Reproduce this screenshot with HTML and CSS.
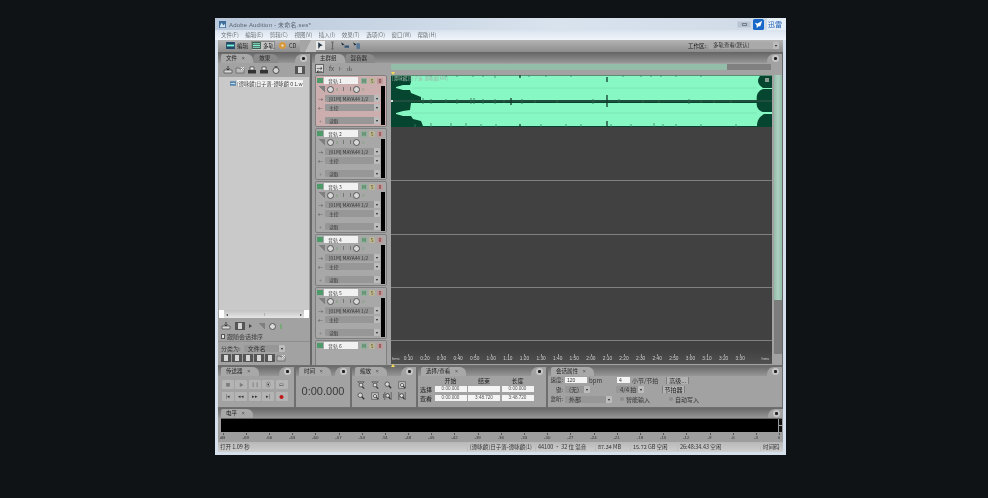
FILE: index.html
```html
<!DOCTYPE html>
<html>
<head>
  <meta charset="utf-8">
  <link rel="stylesheet" href="styles.css">
</head>
<body>
  <svg class="defs" width="0" height="0">
    <symbol id="lens" viewBox="0 0 10 10">
      <circle cx="4" cy="4" r="2.8" fill="#d8d8d8" stroke="#444" stroke-width="1"/>
      <path d="M6 6 L9 9" stroke="#333" stroke-width="1.6"/>
    </symbol>
    <symbol id="lens-box" viewBox="0 0 10 10">
      <rect x="1" y="1" width="8" height="8" fill="#cfcfcf" stroke="#555"/>
      <circle cx="5" cy="5" r="2" fill="#eee" stroke="#444"/>
      <path d="M6.5 6.5 L9 9" stroke="#333" stroke-width="1.4"/>
    </symbol>
    <symbol id="lens-arrow" viewBox="0 0 10 10">
      <path d="M1 1 L9 1 M1 1 L4 4 M9 1 L6 4" stroke="#555" stroke-width="1"/>
      <circle cx="5" cy="5" r="2.4" fill="#ddd" stroke="#444"/>
      <path d="M6.5 7 L9 9.5" stroke="#333" stroke-width="1.4"/>
    </symbol>
    <symbol id="lens-bar" viewBox="0 0 10 10">
      <path d="M1 0V10 M9 0V10" stroke="#555"/>
      <circle cx="4.5" cy="4.5" r="2.4" fill="#ddd" stroke="#333"/>
      <path d="M6 6.5 L8 9" stroke="#333" stroke-width="1.4"/>
    </symbol>
    <symbol id="file-a" viewBox="0 0 10 8">
      <path d="M1 4 H9 V7 H1Z" fill="#d8d8d8" stroke="#555" stroke-width=".8"/>
      <path d="M5 0 V4 M3.5 2.5 L5 4 L6.5 2.5" stroke="#333" fill="none" stroke-width=".9"/>
    </symbol>
    <symbol id="file-b" viewBox="0 0 10 8">
      <path d="M1 2 H4 L5 3 H9 V7 H1Z" fill="#bdbdbd" stroke="#666" stroke-width=".8"/>
      <path d="M6 1 L9 4 M9 1 L6 4" stroke="#eee" stroke-width=".9"/>
    </symbol>
    <symbol id="file-c" viewBox="0 0 10 8">
      <path d="M1 4 H9 V7.5 H1Z" fill="#333"/>
      <path d="M3 1 H7 V4 H3Z" fill="#eee" stroke="#333" stroke-width=".7"/>
    </symbol>
    <symbol id="file-d" viewBox="0 0 10 8">
      <circle cx="5" cy="4.5" r="3" fill="#d5d5d5" stroke="#444" stroke-width=".9"/>
      <path d="M3.5 0.8 H6.5" stroke="#444"/>
    </symbol>
  </svg>

  <div class="window">
    <div class="titlebar">
      <svg class="app-icon" viewBox="0 0 8 8"><rect width="8" height="8" fill="#3f6f9c"/><path d="M1 6 L3 2 L5 5 L7 3 V7 H1Z" fill="#d6e6f2"/></svg>
      <span class="title-text">Adobe Audition - 未命名.ses*</span>
      <span class="title-spacer"></span>
      <span class="restore-btn"><i></i></span>
      <svg class="thunder-icon" viewBox="0 0 12 12"><rect width="12" height="12" rx="2" fill="#1768c8"/><path d="M10 2 L5 5 L2 4 L4 7 L4 10 L6 8 L8 8Z" fill="#fff"/></svg>
      <span class="thunder-text">迅雷</span>
    </div>
    <div class="menubar">
      <span>文件(F)</span><span>编辑(E)</span><span>剪辑(C)</span><span>视图(V)</span><span>插入(I)</span><span>效果(T)</span><span>选项(O)</span><span>窗口(W)</span><span>帮助(H)</span>
    </div>
    <div class="toolbar">
      <span class="mode-btn"><svg viewBox="0 0 10 8"><rect width="10" height="8" fill="#24486a"/><path d="M1 4h8" stroke="#7fd" stroke-width="2"/></svg>编辑</span>
      <span class="mode-btn active"><svg viewBox="0 0 10 8"><rect width="10" height="8" fill="#3a5f4a"/><path d="M1 2h8M1 4h8M1 6h8" stroke="#9fe"/></svg>多轨</span>
      <span class="mode-btn"><svg viewBox="0 0 8 8"><circle cx="4" cy="4" r="4" fill="#d89a3c"/><circle cx="4" cy="4" r="1.2" fill="#eee"/></svg>CD</span>
      <span class="tool-sep"></span>
      <span class="tool-btn active"><svg viewBox="0 0 8 8"><path d="M2 1 L6 4 L4 4.5 L2 7Z" fill="#234"/></svg></span>
      <span class="tool-btn"><svg viewBox="0 0 8 8"><path d="M4 1V7M3 1h2M3 7h2" stroke="#666"/></svg></span>
      <span class="tool-btn"><svg viewBox="0 0 8 8"><path d="M1 1 L4 3 L2 4Z" fill="#234"/><path d="M4 5h4" stroke="#357" stroke-width="2"/></svg></span>
      <span class="tool-btn"><svg viewBox="0 0 8 8"><path d="M1 1 L4 3 L2 4Z" fill="#234"/><rect x="4" y="2" width="3" height="5" fill="#579"/></svg></span>
      <span class="title-spacer"></span>
      <span class="workspace-label">工作区:</span>
      <span class="select workspace-select">多轨查看(默认)<b></b></span>
    </div>

    <div class="main">
      <div class="files-panel">
        <div class="panel-head">
          <span class="tab">文件 <i>×</i></span><span class="tab off">效果</span>
          <span class="title-spacer"></span><span class="head-notch"><i class="round-btn"></i></span>
        </div>
        <div class="files-tools">
          <svg><use href="#file-a"/></svg><svg><use href="#file-b"/></svg><svg><use href="#file-c"/></svg><svg><use href="#file-c"/></svg><svg><use href="#file-d"/></svg>
          <span class="title-spacer"></span><i class="glyph boxed"></i>
        </div>
        <div class="file-list">
          <div class="file-row">
            <svg viewBox="0 0 8 6"><rect width="8" height="6" fill="#5b86b0"/><path d="M1 3h6" stroke="#dff"/></svg>
            <span>[谭咏麟]日子落-谭咏麟 0 1.w</span>
          </div>
        </div>
        <div class="file-scroll"><b>◂</b><span>⫶</span><b>▸</b></div>
        <div class="files-controls">
          <svg><use href="#file-a"/></svg><i class="glyph boxed"></i><i class="mini-arrow"></i>
          <i class="vol-ramp"></i><i class="knob"></i><i class="led"></i>
        </div>
        <div class="check-row"><i class="check"></i>跟随会话排序</div>
        <div class="sort-row">分类为:<span class="select sort-select">文件名<b></b></span></div>
        <div class="files-foot">
          <i class="glyph boxed"></i><i class="glyph boxed"></i><i class="glyph boxed"></i><i class="glyph boxed"></i><i class="glyph boxed"></i><svg><use href="#file-b"/></svg>
        </div>
      </div>

      <div class="session-panel">
        <div class="panel-head">
          <span class="tab">主群组</span><span class="tab off">混音器</span>
          <span class="title-spacer"></span><span class="head-notch"><i class="round-btn"></i></span>
        </div>
        <div class="session-top">
          <div class="track-tools">
            <span class="tt-box">⇄</span><span>fx</span><span>⊦</span><span>ılı</span>
          </div>
          <div class="overview"><i></i></div>
        </div>
        <div class="session-body">
          <div class="track-heads">
            <div class="track armed">
              <div class="tr-row"><i class="tr-led"></i><span class="tr-name">音轨 1</span><i class="msr m">M</i><i class="msr s">S</i><i class="msr r">R</i></div>
              <div class="tr-body">
                <div class="tr-rows">
                  <div class="tr-knobs"><i class="vol-ramp"></i><i class="knob"></i><em>0</em><i class="pan"></i><i class="knob"></i><em>0</em></div>
                  <div class="tr-sel"><u>→</u><span class="select">[01M] MAYA44 1/2<b></b></span></div>
                  <div class="tr-sel"><u>←</u><span class="select">主控<b></b></span></div>
                  <div class="tr-sel read"><u>◦</u><span class="select">读取<b></b></span></div>
                </div>
                <i class="tr-meter"></i>
              </div>
            </div>
            <div class="track">
              <div class="tr-row"><i class="tr-led"></i><span class="tr-name">音轨 2</span><i class="msr m">M</i><i class="msr s">S</i><i class="msr r">R</i></div>
              <div class="tr-body">
                <div class="tr-rows">
                  <div class="tr-knobs"><i class="vol-ramp"></i><i class="knob"></i><em>0</em><i class="pan"></i><i class="knob"></i><em>0</em></div>
                  <div class="tr-sel"><u>→</u><span class="select">[01M] MAYA44 1/2<b></b></span></div>
                  <div class="tr-sel"><u>←</u><span class="select">主控<b></b></span></div>
                  <div class="tr-sel read"><u>◦</u><span class="select">读取<b></b></span></div>
                </div>
                <i class="tr-meter"></i>
              </div>
            </div>
            <div class="track">
              <div class="tr-row"><i class="tr-led"></i><span class="tr-name">音轨 3</span><i class="msr m">M</i><i class="msr s">S</i><i class="msr r">R</i></div>
              <div class="tr-body">
                <div class="tr-rows">
                  <div class="tr-knobs"><i class="vol-ramp"></i><i class="knob"></i><em>0</em><i class="pan"></i><i class="knob"></i><em>0</em></div>
                  <div class="tr-sel"><u>→</u><span class="select">[01M] MAYA44 1/2<b></b></span></div>
                  <div class="tr-sel"><u>←</u><span class="select">主控<b></b></span></div>
                  <div class="tr-sel read"><u>◦</u><span class="select">读取<b></b></span></div>
                </div>
                <i class="tr-meter"></i>
              </div>
            </div>
            <div class="track">
              <div class="tr-row"><i class="tr-led"></i><span class="tr-name">音轨 4</span><i class="msr m">M</i><i class="msr s">S</i><i class="msr r">R</i></div>
              <div class="tr-body">
                <div class="tr-rows">
                  <div class="tr-knobs"><i class="vol-ramp"></i><i class="knob"></i><em>0</em><i class="pan"></i><i class="knob"></i><em>0</em></div>
                  <div class="tr-sel"><u>→</u><span class="select">[01M] MAYA44 1/2<b></b></span></div>
                  <div class="tr-sel"><u>←</u><span class="select">主控<b></b></span></div>
                  <div class="tr-sel read"><u>◦</u><span class="select">读取<b></b></span></div>
                </div>
                <i class="tr-meter"></i>
              </div>
            </div>
            <div class="track">
              <div class="tr-row"><i class="tr-led"></i><span class="tr-name">音轨 5</span><i class="msr m">M</i><i class="msr s">S</i><i class="msr r">R</i></div>
              <div class="tr-body">
                <div class="tr-rows">
                  <div class="tr-knobs"><i class="vol-ramp"></i><i class="knob"></i><em>0</em><i class="pan"></i><i class="knob"></i><em>0</em></div>
                  <div class="tr-sel"><u>→</u><span class="select">[01M] MAYA44 1/2<b></b></span></div>
                  <div class="tr-sel"><u>←</u><span class="select">主控<b></b></span></div>
                  <div class="tr-sel read"><u>◦</u><span class="select">读取<b></b></span></div>
                </div>
                <i class="tr-meter"></i>
              </div>
            </div>
            <div class="track">
              <div class="tr-row"><i class="tr-led"></i><span class="tr-name">音轨 6</span><i class="msr m">M</i><i class="msr s">S</i><i class="msr r">R</i></div>
            </div>
          </div>

          <div class="lanes">
            <div class="lane clip-lane">
              <svg class="wave" viewBox="0 0 381 52" preserveAspectRatio="none">
                <rect width="381" height="52" fill="#06452f"/>
                <path fill="#87f8c4" d="M5 12 L12 10 L19 10 L20 7 L20 1 L381 1 L381 25 L30 25 L30 22 L20 18 L19 15 L12 15 L5 13Z"/>
                <path fill="#87f8c4" d="M5 38 L12 36 L19 35 L20 28 L381 28 L381 51 L32 51 L30 46 L22 44 L20 41 L12 41 L5 39Z"/>
                <path fill="#06452f" d="M381 1 H369 C366 5 366 9 372 13 H381Z M381 14 H372 C366 16 365 22 366 26 C365 30 366 35 372 37 H381Z M381 39 H373 C368 42 366 46 366 51 H381Z"/>
                <rect x="0" y="0" width="381" height="1" fill="#5c8c76"/>
                <path d="M21 13H366 M21 38H366" stroke="#7ce6b5" stroke-width="1"/>
                <path d="M0 26H381" stroke="#3c5a4d" stroke-width="1.1"/>
                <path stroke="#2f6b52" stroke-width="0.8" fill="none" d="M32 23v6 M40 24v5 M55 24v4 M66 24v5 M80 23v6 M83 23v6 M92 24v5 M104 24v5 M113 25v3 M131 24v5 M144 25v3 M166 25v3 M202 24v5 M228 24v4 M252 25v3 M268 25v3 M298 24v5 M310 25v3 M323 25v3 M340 25v3"/>
                <path stroke="#15392b" stroke-width="1.3" fill="none" d="M216 20v12 M216 2v5 M216 46v6 M120 23v7 M129 0v3 M129 49v3"/>
                <path stroke="#3d7d62" stroke-width="0.8" fill="none" d="M40 0v2 M55 0v2 M66 0v2 M82 0v2 M92 0v2 M104 0v3 M138 0v2 M155 0v2 M180 0v2 M232 0v2 M250 0v2 M260 0v2 M270 0v2 M285 0v2 M310 0v2 M24 49v3 M40 48v4 M60 48v4 M75 48v4 M90 49v3 M105 49v3 M150 49v3 M175 49v3 M190 49v3 M220 49v3 M240 49v3 M263 48v4 M272 49v3 M285 49v3 M310 49v3 M345 49v3"/>
                <path d="M0 26h2" stroke="#ddd" stroke-width="2"/>
              </svg>
              <span class="clip-name">[谭咏麟]日子落-谭咏麟(MN)</span>
              <i class="clip-flag"></i>
            </div>
            <div class="lane"></div>
            <div class="lane"></div>
            <div class="lane"></div>
            <div class="lane"></div>
            <div class="ruler">
              <span class="hms">hms</span>
              <div class="ticks">
                <span>0:10</span><span>0:20</span><span>0:30</span><span>0:40</span><span>0:50</span><span>1:00</span><span>1:10</span><span>1:20</span><span>1:30</span><span>1:40</span><span>1:50</span><span>2:00</span><span>2:10</span><span>2:20</span><span>2:30</span><span>2:40</span><span>2:50</span><span>3:00</span><span>3:10</span><span>3:20</span><span>3:30</span>
              </div>
              <span class="hms end">hms</span>
            </div>
            <i class="marker top"></i>
            <i class="marker bottom"></i>
          </div>

          <div class="v-scroll"><i></i></div>
        </div>
      </div>
    </div>

    <div class="dock">
      <div class="dock-panel transport">
        <div class="panel-head"><span class="tab">传送器 <i>×</i></span><span class="title-spacer"></span><span class="head-notch"><i class="round-btn"></i></span></div>
        <div class="transport-grid">
          <span class="tbtn">■</span><span class="tbtn">▶</span><span class="tbtn">❙❙</span><span class="tbtn dark">⦿</span><span class="tbtn dark">▭</span>
          <span class="tbtn dark">|◂</span><span class="tbtn dark">◂◂</span><span class="tbtn dark">▸▸</span><span class="tbtn dark">▸|</span><span class="tbtn rec">●</span>
        </div>
      </div>
      <div class="dock-panel time">
        <div class="panel-head"><span class="tab">时间 <i>×</i></span><span class="title-spacer"></span><span class="head-notch"><i class="round-btn"></i></span></div>
        <div class="time-value">0:00.000</div>
      </div>
      <div class="dock-panel zoom">
        <div class="panel-head"><span class="tab">缩放 <i>×</i></span><span class="title-spacer"></span><span class="head-notch"><i class="round-btn"></i></span></div>
        <div class="zoom-grid">
          <svg><use href="#lens-arrow"/></svg><svg><use href="#lens-arrow"/></svg><svg><use href="#lens"/></svg><svg><use href="#lens-box"/></svg>
          <svg><use href="#lens"/></svg><svg><use href="#lens-box"/></svg><svg class="after-sep"><use href="#lens-bar"/></svg><svg><use href="#lens-bar"/></svg>
        </div>
      </div>
      <div class="dock-panel selection">
        <div class="panel-head"><span class="tab">选择/查看 <i>×</i></span><span class="title-spacer"></span><span class="head-notch"><i class="round-btn"></i></span></div>
        <div class="sel-grid">
          <span></span><span class="sel-head">开始</span><span class="sel-head">结束</span><span class="sel-head">长度</span>
          <span>选择</span><span class="sel-val">0:00.000</span><span class="sel-val"></span><span class="sel-val">0:00.000</span>
          <span>查看</span><span class="sel-val">0:00.000</span><span class="sel-val">3:48.720</span><span class="sel-val">3:48.720</span>
        </div>
      </div>
      <div class="dock-panel props">
        <div class="panel-head"><span class="tab">会话属性 <i>×</i></span><span class="title-spacer"></span><span class="head-notch"><i class="round-btn"></i></span></div>
        <div class="props-body">
          <div class="props-row">
            <span class="p-label">速度:</span><span class="p-input">120</span><span class="p-unit bpm">bpm</span>
            <span class="p-input beat">4</span><span class="p-unit">小节/节拍</span><span class="p-btn">高级...</span>
          </div>
          <div class="props-row">
            <span class="p-label">键:</span><span class="select key">(无)<b></b></span>
            <span class="select sig">4/4 拍<b></b></span><span class="p-btn">节拍器</span>
          </div>
          <div class="props-row">
            <span class="p-label">监听:</span><span class="select monitor">外部<b></b></span>
            <i class="radio"></i><span class="p-unit">智能输入</span><i class="radio auto"></i><span class="p-unit">自动写入</span>
          </div>
        </div>
      </div>
    </div>

    <div class="levels">
      <div class="panel-head"><span class="tab">电平 <i>×</i></span><span class="title-spacer"></span><span class="head-notch"><i class="round-btn"></i></span></div>
      <div class="level-bar"><i></i><b></b></div>
      <div class="level-scale">
        <span>dB</span><span>-69</span><span>-66</span><span>-63</span><span>-60</span><span>-57</span><span>-54</span><span>-51</span><span>-48</span><span>-45</span><span>-42</span><span>-39</span><span>-36</span><span>-33</span><span>-30</span><span>-27</span><span>-24</span><span>-21</span><span>-18</span><span>-15</span><span>-12</span><span>-9</span><span>-6</span><span>-3</span><span>0</span>
      </div>
    </div>

    <div class="statusbar">
      <span class="st-open">打开 1.09 秒</span>
      <span class="st-file">[谭咏麟]日子落-谭咏麟(1)</span>
      <span class="st-rate">44100 • 32 位 混音</span>
      <span class="st-mem">87.34 MB</span>
      <span class="st-disk">15.72 GB 空闲</span>
      <span class="st-free">26:48:34.43 空闲</span>
      <span class="st-clock">时间码</span>
    </div>
  </div>
</body>
</html>
```

FILE: styles.css
```css
* {
  margin: 0;
  padding: 0;
  box-sizing: border-box;
}

body {
  width: 988px;
  height: 498px;
  overflow: hidden;
  background: #101316;
  font-family: "Noto Sans CJK SC", "Liberation Sans", sans-serif;
  font-size: 6px;
  color: #3c3c3c;
}

i, b, u, em {
  font-style: normal;
  font-weight: normal;
  text-decoration: none;
}

.defs {
  display: block;
}

.window {
  width: 571px;
  height: 437px;
  margin: 18px 0 0 215px;
  padding: 0 3px 3px;
  background: #d5e0ec;
  display: flex;
  flex-direction: column;
  overflow: hidden;
  filter: blur(0.65px);
}

.title-spacer {
  flex: 1;
}

/* title + menu */
.titlebar {
  height: 12px;
  margin: 0 -3px;
  padding: 0 0 0 4px;
  display: flex;
  align-items: center;
  background: linear-gradient(90deg, #b9c8da, #d9e3ee 60%, #cfdae7);
  font-size: 5.5px;
  color: #59646e;
}

.app-icon {
  width: 7px;
  height: 7px;
  margin-right: 3px;
}

.title-text {
  font-family: "Liberation Sans", "Noto Sans CJK SC", sans-serif;
  font-size: 6px;
  letter-spacing: 0.2px;
}

.restore-btn {
  width: 14px;
  height: 7px;
  margin-right: 2px;
  background: #b8c4d2;
  border: 1px solid #c8d2de;
  display: flex;
  align-items: center;
  justify-content: center;
}

.restore-btn i {
  width: 5px;
  height: 3px;
  border: 1px solid #75808c;
}

.thunder-icon {
  width: 11px;
  height: 11px;
  margin-right: 3px;
}

.thunder-text {
  width: 19px;
  height: 12px;
  line-height: 12px;
  background: #e6eef6;
  color: #2a66b8;
  font-size: 7px;
  padding-left: 1px;
}

.menubar {
  height: 10px;
  margin: 0 -3px;
  padding-left: 6px;
  display: flex;
  gap: 6.5px;
  align-items: center;
  background: linear-gradient(180deg, #d9e3ee, #f1f5fa);
  font-size: 5.5px;
  color: #6e747a;
}

/* mode toolbar */
.toolbar {
  height: 12px;
  margin: 0 -3px;
  padding: 0 4px 0 8px;
  border: solid #d5e0ec;
  border-width: 0 3px;
  display: flex;
  align-items: center;
  background: linear-gradient(180deg, #b4b4b4, #8d8d8d);
  color: #222;
  font-size: 5.5px;
}

.mode-btn {
  display: flex;
  align-items: center;
  gap: 2px;
  margin-right: 4px;
}

.mode-btn svg {
  width: 9px;
  height: 7px;
}

.mode-btn.active {
  background: #c4c4c4;
  outline: 1px solid #8a8a8a;
}

.tool-sep {
  width: 16px;
  height: 12px;
  background: linear-gradient(115deg, #a5a5a5 50%, #c0c0c0 50%);
}

.tool-btn {
  width: 9px;
  height: 9px;
  margin-right: 3px;
}

.tool-btn svg {
  display: block;
  width: 9px;
  height: 9px;
}

.tool-btn.active {
  background: #e8e8e8;
}

.workspace-label {
  margin-right: 3px;
  color: #222;
}

.select {
  position: relative;
  display: block;
  height: 7px;
  line-height: 7px;
  padding-left: 4px;
  background: #979797;
  border-radius: 1px;
  color: #333;
  white-space: nowrap;
  overflow: hidden;
}

.select b {
  position: absolute;
  right: 0;
  top: 0;
  width: 6px;
  height: 7px;
  background: #bcbcbc;
}

.select b::after {
  content: "";
  position: absolute;
  left: 2px;
  top: 3px;
  border: 1.5px solid transparent;
  border-top: 2px solid #222;
}

.workspace-select {
  width: 70px;
  background: #a9a9a9;
}

/* main area */
.main {
  height: 313px;
  display: flex;
  gap: 2px;
  background: #666;
  padding-top: 1px;
}

.panel-head {
  height: 10px;
  display: flex;
  align-items: flex-end;
  padding-left: 3px;
  background: linear-gradient(180deg, #686868, #969696);
  flex-shrink: 0;
}

.tab {
  height: 9px;
  line-height: 9px;
  padding: 0 8px 0 5px;
  margin-right: 1px;
  background: #a8a8a8;
  border-radius: 2px 6px 0 0;
  color: #222;
  font-size: 5.5px;
}

.tab i {
  margin-left: 3px;
  font-size: 4px;
}

.tab.off {
  background: #8a8a8a;
}

.head-notch {
  width: 15px;
  height: 9px;
  padding-left: 5px;
  background: #a2a2a2;
  border-radius: 7px 0 0 0;
  display: flex;
  align-items: center;
}

.round-btn {
  display: block;
  width: 7px;
  height: 7px;
  border-radius: 50%;
  background: radial-gradient(circle, #222 0 1.2px, #c6c6c6 2px);
}

/* files */
.files-panel {
  width: 92px;
  background: #a2a2a2;
  display: flex;
  flex-direction: column;
}

.files-tools {
  height: 14px;
  display: flex;
  align-items: center;
  gap: 2px;
  padding: 0 5px;
}

.files-tools svg,
.files-controls svg,
.files-foot svg {
  width: 10px;
  height: 8px;
  flex-shrink: 0;
}

.glyph.boxed {
  display: block;
  width: 10px;
  height: 8px;
  background: #d5d5d5;
  border: 1px solid #555;
  border-width: 1px 3px;
}

.file-list {
  height: 233px;
  margin: 0 1px;
  padding: 3px 0 0 11px;
  background: #c9c9c9;
}

.file-row {
  display: flex;
  align-items: center;
  gap: 1px;
  white-space: nowrap;
  overflow: hidden;
}

.file-row svg {
  width: 6px;
  height: 5px;
  flex-shrink: 0;
}

.file-row span {
  background: #f2f2f2;
  font-size: 5.2px;
}

.file-scroll {
  height: 8px;
  margin: 0 1px;
  display: flex;
  align-items: center;
  justify-content: space-between;
  padding: 0 2px;
  background: linear-gradient(180deg, #c2c2c2, #e6e6e6);
  border: solid #fff;
  border-width: 0 5px;
  font-size: 4px;
}

.file-scroll b {
  color: #333;
}

.files-controls {
  height: 14px;
  display: flex;
  align-items: center;
  gap: 4px;
  padding: 3px 3px 0;
}

.vol-ramp {
  display: block;
  width: 7px;
  height: 6px;
  background: linear-gradient(to top right, transparent 50%, #7f7f7f 50%);
  flex-shrink: 0;
}

.knob {
  display: block;
  width: 7px;
  height: 7px;
  border-radius: 50%;
  background: #d9d9d9;
  border: 1px solid #555;
  flex-shrink: 0;
}

.led {
  display: block;
  width: 2px;
  height: 5px;
  background: #78a878;
}

.mini-arrow {
  width: 0;
  height: 0;
  border: 2px solid transparent;
  border-left: 3px solid #444;
}

.check-row {
  height: 10px;
  display: flex;
  align-items: center;
  gap: 2px;
  padding-left: 3px;
  border-bottom: 1px solid #8d8d8d;
}

.check {
  width: 4px;
  height: 5px;
  background: #e4e4e4;
  border: 1px solid #555;
}

.sort-row {
  height: 12px;
  display: flex;
  align-items: center;
  gap: 3px;
  padding: 1px 3px 0;
}

.sort-select {
  width: 41px;
}

.files-foot {
  height: 9px;
  display: flex;
  align-items: center;
  gap: 1px;
  padding: 0 3px;
}

/* multitrack */
.session-panel {
  width: 470px;
  background: #a2a2a2;
  display: flex;
  flex-direction: column;
}

.session-top {
  height: 12px;
  display: flex;
  flex-shrink: 0;
}

.track-tools {
  width: 79px;
  padding-left: 3px;
  display: flex;
  align-items: center;
  gap: 5px;
  font-size: 6px;
  color: #444;
}

.tt-box {
  width: 9px;
  height: 9px;
  line-height: 9px;
  text-align: center;
  background: #d8d8d8;
  border: 1px solid #666;
  color: #222;
}

.overview {
  width: 380px;
  height: 6px;
  margin-top: 1px;
  background: #808080;
}

.overview i {
  display: block;
  width: 336px;
  height: 6px;
  background: #93bca9;
}

.session-body {
  flex: 1;
  min-height: 0;
  display: flex;
  align-items: flex-start;
}

.track-heads {
  width: 72px;
  height: 290px;
  margin-left: 3px;
  flex-shrink: 0;
  overflow: hidden;
  display: flex;
  flex-direction: column;
  gap: 1px;
}

.track {
  height: 52px;
  flex-shrink: 0;
  padding: 1px 1px;
  background: #a8a8a8;
  border: 1px solid #7f7f7f;
  border-radius: 2px;
}

.track.armed {
  background: #cdaeae;
}

.tr-row {
  height: 8px;
  display: flex;
  align-items: center;
}

.tr-led {
  width: 6px;
  height: 5px;
  background: #4e9a6a;
  margin-right: 1px;
}

.tr-name {
  width: 34px;
  height: 7px;
  line-height: 7px;
  padding-left: 4px;
  background: #f1f1f1;
  font-size: 5px;
  margin-right: 3px;
}

.msr {
  width: 6px;
  height: 6px;
  line-height: 6px;
  margin-right: 2px;
  text-align: center;
  font-size: 4.5px;
  background: #b2b2b2;
  border-radius: 1px;
  flex-shrink: 0;
}

.msr.m { background: #8eb299; color: #2b5a3c; }
.msr.s { background: #b9b596; color: #62591e; }
.msr.r { background: #bf9999; color: #6a2222; }

.tr-body {
  display: flex;
  gap: 1px;
}

.tr-rows {
  flex: 1;
  min-width: 0;
}

.tr-knobs {
  height: 9px;
  display: flex;
  align-items: center;
  gap: 2px;
  padding-left: 1px;
}

.tr-knobs em {
  color: #74a074;
  font-size: 4px;
  margin-right: 7px;
}

.pan {
  width: 8px;
  height: 4px;
  border: solid #777;
  border-width: 0 1px;
  margin-left: -4px;
}

.tr-sel {
  height: 9px;
  display: flex;
  align-items: center;
  gap: 1px;
  font-size: 5px;
}

.tr-sel.read {
  margin-top: 4px;
}

.tr-sel u {
  width: 7px;
  text-align: center;
  font-size: 5px;
  flex-shrink: 0;
}

.tr-sel .select {
  flex: 1;
  min-width: 0;
  font-size: 4.8px;
}

.tr-meter {
  width: 4px;
  height: 39px;
  margin-top: 1px;
  background: #000;
  flex-shrink: 0;
}

.lanes {
  position: relative;
  width: 381px;
  height: 289px;
  margin-left: 4px;
  flex-shrink: 0;
  background: #414141;
  display: flex;
  flex-direction: column;
}

.lane {
  height: 53.4px;
  flex-shrink: 0;
  border-bottom: 1px solid #808080;
}

.clip-lane {
  position: relative;
  height: 52px;
  margin-bottom: 1.4px;
  border-bottom: 0;
}

.wave {
  display: block;
  width: 381px;
  height: 52px;
}

.clip-name {
  position: absolute;
  left: 1px;
  top: 0;
  font-size: 4.6px;
  color: #9fb4aa;
  white-space: nowrap;
}

.clip-flag {
  position: absolute;
  left: 374px;
  top: 3px;
  width: 4px;
  height: 4px;
  background: #8a9a92;
}

.ruler {
  position: relative;
  margin-top: auto;
  display: flex;
  align-items: flex-end;
  flex: 0 0 14px;
  background: linear-gradient(180deg, #414141, #505050);
  color: #cfcfcf;
  font-size: 4.8px;
  font-family: "Liberation Sans", sans-serif;
  padding-bottom: 3px;
}

.hms {
  width: 9px;
  flex-shrink: 0;
  font-size: 4px;
  padding-left: 1px;
}

.hms.end {
  position: absolute;
  right: 3px;
  width: auto;
}

.ticks {
  display: grid;
  grid-template-columns: repeat(21, 16.6px);
  text-align: center;
}

.ticks span {
  position: relative;
}

.ticks span::before {
  content: "";
  position: absolute;
  left: 50%;
  top: -2px;
  width: 1px;
  height: 2px;
  background: #9a9a9a;
}

.marker {
  position: absolute;
  left: 0;
  width: 0;
  height: 0;
  border: 2px solid transparent;
}

.marker.top {
  top: -3px;
  border-top: 3px solid #f2dc52;
}

.marker.bottom {
  bottom: -3px;
  border-bottom: 3px solid #f2dc52;
}

.v-scroll {
  width: 8px;
  height: 279px;
  margin-left: 2px;
  flex-shrink: 0;
  background: #7c7c7c;
  border-radius: 1px;
}

.v-scroll i {
  display: block;
  height: 225px;
  background: linear-gradient(90deg, #91bba8, #aed0c0, #91bba8);
}

/* dock */
.dock {
  height: 43px;
  padding-top: 1px;
  background: #6e6e6e;
  display: flex;
  gap: 2px;
  flex-shrink: 0;
}

.dock-panel {
  background: #a2a2a2;
  height: 41px;
  display: flex;
  flex-direction: column;
}

.transport { width: 76px; }
.time { width: 54px; }
.zoom { width: 64px; }
.selection { width: 128px; }
.props { width: 234px; }

.transport-grid {
  display: grid;
  grid-template-columns: repeat(5, 12px);
  grid-auto-rows: 9px;
  gap: 3px 1.4px;
  padding: 4px 4px;
}

.tbtn {
  line-height: 9px;
  text-align: center;
  font-size: 4.5px;
  background: #b4b4b4;
  border-radius: 1px;
  color: #7a7a7a;
  overflow: hidden;
}

.tbtn.dark {
  color: #333;
}

.tbtn.rec {
  color: #c01818;
}

.time-value {
  flex: 1;
  display: flex;
  align-items: center;
  justify-content: center;
  font-family: "Liberation Sans", sans-serif;
  font-size: 11px;
  color: #3a3a3a;
}

.zoom-grid {
  display: grid;
  grid-template-columns: repeat(4, 8px);
  grid-auto-rows: 8px;
  gap: 3px 5.5px;
  padding: 5px 5px;
}

.zoom-grid svg {
  width: 8px;
  height: 8px;
}

.zoom-grid .after-sep {
  outline: 0;
  box-shadow: -3px 0 0 -2px #666;
}

.sel-grid {
  display: grid;
  grid-template-columns: 13px 32px 32px 32px;
  grid-template-rows: 9px 9px 9px;
  column-gap: 1.5px;
  padding: 0 2px;
  align-items: center;
  color: #222;
}

.sel-head {
  text-align: center;
}

.sel-val {
  height: 6px;
  line-height: 6px;
  background: #f4f4f4;
  text-align: center;
  font-family: "Liberation Sans", sans-serif;
  font-size: 4.6px;
  color: #555;
}

.props-body {
  padding: 0 2px;
}

.props-row {
  height: 9.5px;
  display: flex;
  align-items: center;
  gap: 2px;
  color: #333;
  white-space: nowrap;
}

.p-label {
  width: 13px;
  flex-shrink: 0;
  text-align: right;
  font-size: 5.5px;
}

.p-input {
  width: 22px;
  height: 6px;
  line-height: 6px;
  padding-left: 2px;
  background: #f4f4f4;
  font-family: "Liberation Sans", sans-serif;
  font-size: 5px;
  flex-shrink: 0;
}

.p-unit {
  white-space: nowrap;
}

.bpm {
  width: 10px;
}

.p-input.beat {
  width: 13px;
  margin-left: 16px;
}

.p-btn {
  width: 23px;
  height: 7px;
  line-height: 7px;
  text-align: center;
  background: #b2b2b2;
  border: 0 solid #7f7f7f;
  border-width: 0 1px;
  margin-left: 6px;
  color: #222;
}

.select.key {
  width: 25px;
}

.select.sig {
  width: 28px;
  margin-left: 24px;
}

.select.sig + .p-btn {
  margin-left: 16px;
}

.select.monitor {
  width: 47px;
}

.radio {
  width: 4px;
  height: 4px;
  margin-left: 6px;
  background: #8d8d8d;
  border-radius: 50%;
}

.radio.auto {
  margin-left: 17px;
}

/* level meter */
.levels {
  height: 34px;
  background: #9e9e9e;
  flex-shrink: 0;
}

.level-bar {
  display: flex;
  height: 14px;
  margin: 0 1px 0 3px;
  background: #000;
  border-top: 1px solid #666;
}

.level-bar i {
  flex: 1;
}

.level-bar b {
  width: 4px;
  background: linear-gradient(180deg, #111 45%, #aaa 45% 55%, #111 55%);
  border: 0 solid #999;
  border-left-width: 1px;
}

.level-scale {
  display: grid;
  grid-template-columns: repeat(25, 23.2px);
  text-align: center;
  font-size: 4.4px;
  font-family: "Liberation Sans", sans-serif;
  padding-top: 3px;
  margin-left: -7px;
  color: #333;
}

.level-scale span {
  position: relative;
}

.level-scale span::before {
  content: "";
  position: absolute;
  left: 50%;
  top: -2px;
  width: 1px;
  height: 2px;
  background: #555;
}

/* status bar */
.statusbar {
  height: 11px;
  display: flex;
  align-items: center;
  background: linear-gradient(180deg, #b8b8b8, #cfcfcf);
  color: #333;
  font-size: 5.5px;
  white-space: nowrap;
}

.statusbar span {
  padding-left: 2px;
  border-left: 1px solid #bdbdbd;
}

.st-open { width: 249px; border-left: 0 !important; }
.st-file { width: 68px; }
.st-rate { width: 60px; }
.st-mem { width: 35px; }
.st-disk { width: 47px; }
.st-free { width: 83px; }
```
